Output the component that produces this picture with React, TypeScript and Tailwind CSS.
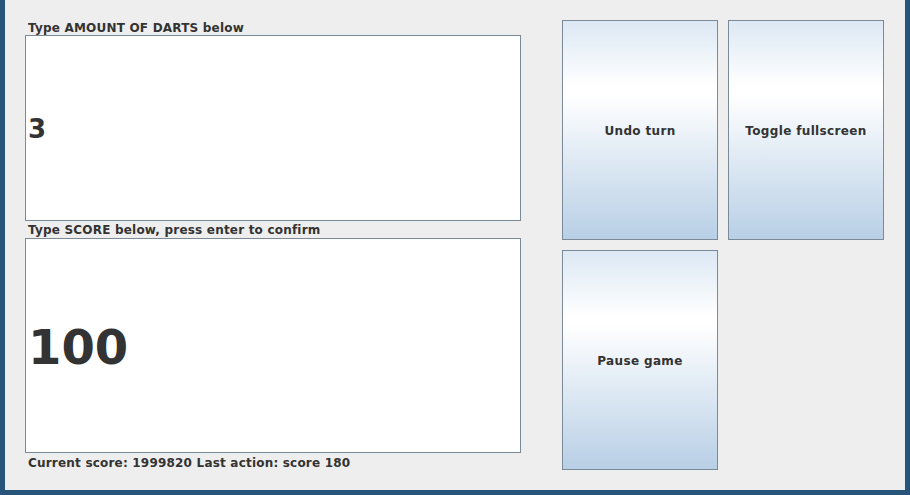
import React from "react";

const font = { fontFamily: '"DejaVu Sans", sans-serif' };

function MetalButton({ label }: { label: string }) {
  return (
    <button
      type="button"
      className="w-[156px] h-[220px] border border-[#7a8a99] bg-[linear-gradient(to_bottom,#dce8f4_0%,#ffffff_30%,#ffffff_34%,#b8cfe6_100%)] pt-[2px] text-[12px] tracking-[0.35px] font-bold text-[#333333] flex items-center justify-center"
    >
      {label}
    </button>
  );
}

export default function App() {
  return (
    <div className="w-[910px] h-[495px] bg-[#26547a] px-[5px] pb-[5px]" style={font}>
      <div className="w-full h-full bg-[#eeeeee] flex pl-[20px] pt-[20px]">
        <div className="w-[496px] flex flex-col text-[#333333]">
          <div className="h-[15px] pl-[3px] pt-[1px] text-[12px] tracking-[0.2px] font-bold leading-[15px]">
            Type AMOUNT OF DARTS below
          </div>
          <div className="h-[186px] bg-white border border-[#7a8a99] flex items-center pl-[2px] pt-[2px] text-[26px] font-bold">
            3
          </div>
          <div className="h-[17px] pl-[3px] pt-[1px] text-[12px] tracking-[0.2px] font-bold leading-[17px]">
            Type SCORE below, press enter to confirm
          </div>
          <div className="h-[215px] bg-white border border-[#7a8a99] flex items-center pl-[2px] pt-[2px] text-[48px] font-bold">
            100
          </div>
          <div className="h-[19px] pl-[3px] pt-[1px] text-[12px] tracking-[0.2px] font-bold leading-[19px]">
            Current score: 1999820 Last action: score 180
          </div>
        </div>
        <div className="ml-[41px] grid grid-cols-[156px_156px] gap-x-[10px] gap-y-[10px] content-start">
          <MetalButton label="Undo turn" />
          <MetalButton label="Toggle fullscreen" />
          <MetalButton label="Pause game" />
        </div>
      </div>
    </div>
  );
}
